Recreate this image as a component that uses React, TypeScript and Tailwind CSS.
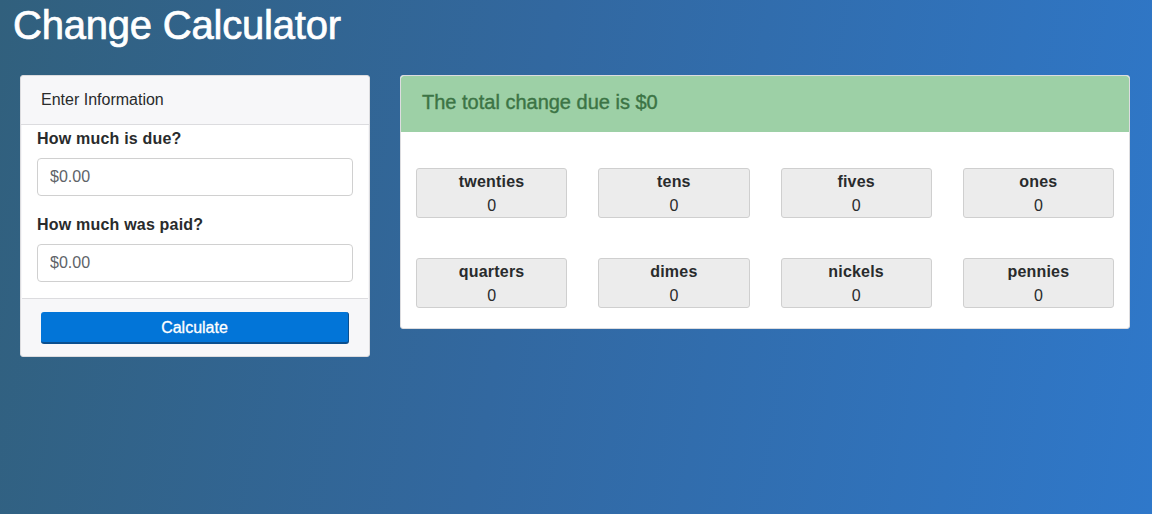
import React, { useState } from 'react';

const denominations = [
  'twenties',
  'tens',
  'fives',
  'ones',
  'quarters',
  'dimes',
  'nickels',
  'pennies',
];

export default function App() {
  const [due, setDue] = useState('');
  const [paid, setPaid] = useState('');

  return (
    <div className="min-h-[514px] w-full bg-[linear-gradient(100deg,#31607d_0%,#3268a0_45%,#2f78ca_100%)] font-['Liberation_Sans',Arial,sans-serif] text-[#292b2c]">
      <h1 className="pl-[13px] pt-[1px] text-[40px] leading-[48px] font-normal text-white tracking-[-0.2px] [-webkit-text-stroke:0.7px_white]">
        Change Calculator
      </h1>

      <div className="mt-[26px] flex items-start gap-[30px] px-5">
        {/* input card */}
        <div className="w-[350px] shrink-0 overflow-hidden rounded-[3px] border border-[#dcdcdf] bg-[#f7f7f9]">
          <div className="h-[49px] border-b border-[#dcdcdf] pl-[20px] pt-[14px] text-[16px] leading-[20px]">
            Enter Information
          </div>
          <div className="mx-[1px] border-b border-[#dcdcdf] bg-white px-[15px] pb-[16px] pt-[2px]">
            <label className="block text-[16px] font-bold leading-[24px] tracking-[0.2px]">How much is due?</label>
            <input
              value={due}
              onChange={(e) => setDue(e.target.value)}
              placeholder="$0.00"
              className="mt-[7px] h-[38px] w-full rounded-[4px] border border-[#d0d0d0] px-3 text-[16px] text-[#464a4c] placeholder:text-[#5e6368] outline-none"
            />
            <label className="mt-[17px] block text-[16px] font-bold leading-[24px] tracking-[0.2px]">How much was paid?</label>
            <input
              value={paid}
              onChange={(e) => setPaid(e.target.value)}
              placeholder="$0.00"
              className="mt-[7px] h-[38px] w-full rounded-[4px] border border-[#d0d0d0] px-3 text-[16px] text-[#464a4c] placeholder:text-[#5e6368] outline-none"
            />
          </div>
          <div className="px-[20px] pb-[12px] pt-[13px]">
            <button className="h-[32px] w-full rounded-[3px] border-b-2 border-r border-[#0a4f8f] bg-[#0275d8] pt-[1px] text-[16px] text-white [-webkit-text-stroke:0.3px_white]">
              Calculate
            </button>
          </div>
        </div>

        {/* results card */}
        <div className="w-[730px] overflow-hidden rounded-[3px] border border-[#dcdcdf] bg-white">
          <div className="h-[56px] rounded-t-[3px] bg-[#9dd0a6] pl-[21px] pt-[14px] text-[20px] leading-[24px] text-[#3c7445] [-webkit-text-stroke:0.4px_#3c7445]">
            The total change due is $0
          </div>
          <div className="grid grid-cols-4 gap-x-[31px] gap-y-[40px] px-[15px] pb-[20px] pt-[36px]">
            {denominations.map((d) => (
              <div
                key={d}
                className="flex h-[50px] flex-col items-center rounded-[3px] border border-[#cfcfcf] bg-[#ececec] pt-[1px] text-[16px] leading-[24px]"
              >
                <span className="font-bold tracking-[0.2px]">{d}</span>
                <span>0</span>
              </div>
            ))}
          </div>
        </div>
      </div>
    </div>
  );
}
